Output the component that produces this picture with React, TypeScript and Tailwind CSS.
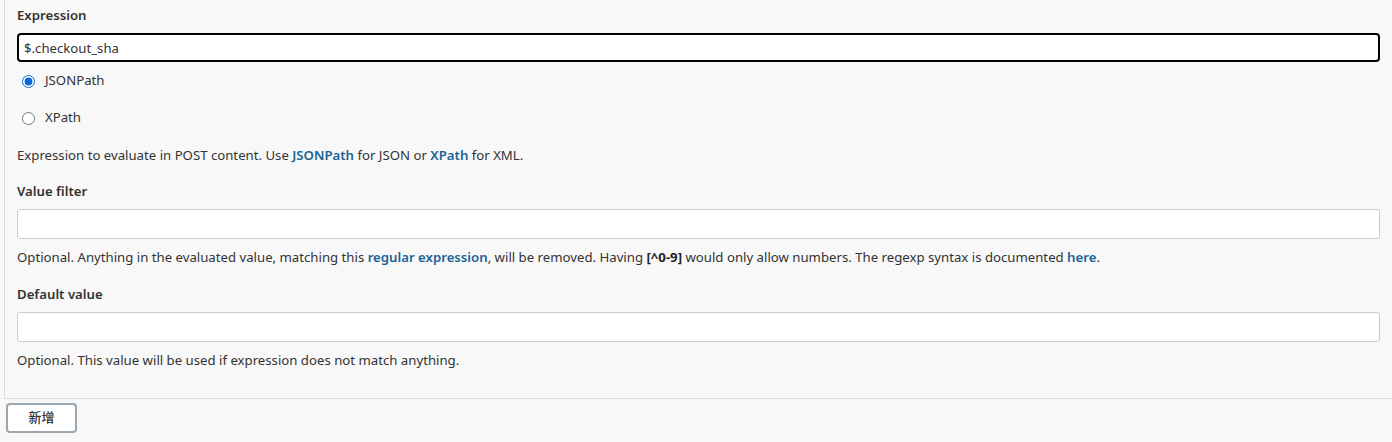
import { useState } from 'react';

const font = { fontFamily: '"Noto Sans", "Noto Sans CJK SC", sans-serif' };

function Help({ children }: { children: React.ReactNode }) {
    return <div className="text-[13.2px] leading-5 text-[#333]">{children}</div>;
}

function Link({ children }: { children: React.ReactNode }) {
    return <a className="font-semibold text-[#1a6496] cursor-pointer">{children}</a>;
}

export default function App() {
    const [mode, setMode] = useState('json');

    return (
        <div className="w-[1392px] h-[442px] bg-[#f8f8f8] overflow-hidden" style={font}>
            <div className="ml-[4px] border-l border-b border-[#dcdcdc] pl-[12px] pr-[12px] pt-[5px] pb-[28px]">
                <div className="text-[13.2px] leading-5 font-semibold text-[#333]">Expression</div>
                <input
                    className="mt-[8px] block w-full h-[29px] rounded-[4px] border-2 border-black bg-white px-[5px] text-[13.2px] text-[#333] outline-none"
                    defaultValue="$.checkout_sha"
                />

                <label className="mt-[9px] flex items-center h-5 text-[13.2px] text-[#333]">
                    <input
                        type="radio"
                        name="mode"
                        checked={mode === 'json'}
                        onChange={() => setMode('json')}
                        className="ml-[5px] mr-[10px] w-[13px] h-[13px] accent-[#0a66d9]"
                    />
                    JSONPath
                </label>
                <label className="mt-[17px] flex items-center h-5 text-[13.2px] text-[#333]">
                    <input
                        type="radio"
                        name="mode"
                        checked={mode === 'xpath'}
                        onChange={() => setMode('xpath')}
                        className="ml-[5px] mr-[10px] w-[13px] h-[13px] accent-[#0a66d9]"
                    />
                    XPath
                </label>

                <div className="mt-[17px]">
                    <Help>
                        Expression to evaluate in POST content. Use <Link>JSONPath</Link> for JSON or <Link>XPath</Link> for XML.
                    </Help>
                </div>

                <div className="mt-[16px] text-[13.2px] leading-5 font-semibold text-[#333]">Value filter</div>
                <input className="mt-[8px] block w-full h-[30px] rounded-[3px] border border-[#ccc] bg-white px-[6px] text-[13.2px] outline-none" />
                <div className="mt-[8px]">
                    <Help>
                        Optional. Anything in the evaluated value, matching this <Link>regular expression</Link>, will be removed. Having{' '}
                        <b className="font-bold text-[#222]">[^0-9]</b> would only allow numbers. The regexp syntax is documented <Link>here</Link>.
                    </Help>
                </div>

                <div className="mt-[17px] text-[13.2px] leading-5 font-semibold text-[#333]">Default value</div>
                <input className="mt-[8px] block w-full h-[30px] rounded-[3px] border border-[#ccc] bg-white px-[6px] text-[13.2px] outline-none" />
                <div className="mt-[8px]">
                    <Help>Optional. This value will be used if expression does not match anything.</Help>
                </div>
            </div>

            <button className="mt-[4px] ml-[6px] w-[71px] h-[30px] rounded-[4px] border-2 border-[#9ba7b0] bg-white text-[13px] font-medium text-[#333]">
                新增
            </button>
        </div>
    );
}
